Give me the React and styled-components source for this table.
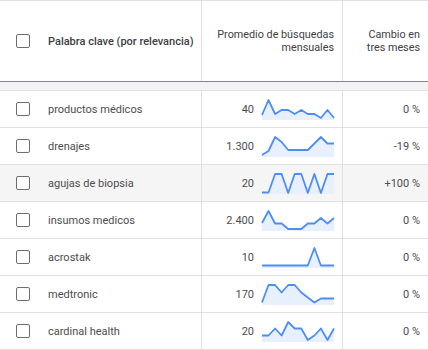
import React from "react";
import styled, { createGlobalStyle } from "styled-components";

const GlobalStyle = createGlobalStyle`
  body {
    margin: 0;
    background: #ffffff;
    font-family: Roboto, "Liberation Sans", Arial, sans-serif;
  }
`;

const Table = styled.div`
  width: 428px;
  overflow: hidden;
  border-top: 1px solid #e0e0e0;
`;

const Row = styled.div`
  display: grid;
  grid-template-columns: 202px 141px 1fr;
  height: ${(p) => (p.$header ? "80px" : "36px")};
  background: ${(p) => (p.$active ? "#f5f5f5" : "#ffffff")};
  border-bottom: 1px solid ${(p) => (p.$header ? "#80868b" : "#e0e0e0")};
  color: ${(p) => (p.$header ? "#3c4043" : "#4d4d4d")};
  font-size: 11px;
`;

const Band = styled.div`
  height: 8px;
  background: #f1f3f4;
  border-bottom: 1px solid #e0e0e0;
`;

const KeywordCell = styled.div`
  display: flex;
  align-items: center;
  gap: 18px;
  padding-left: 16px;
  border-right: 1px solid #e0e0e0;
  font-weight: ${(p) => (p.$header ? 500 : 400)};
`;

const NumberCell = styled.div`
  display: flex;
  align-items: center;
  justify-content: flex-end;
  gap: 8px;
  padding-right: 8px;
  border-right: 1px solid #e0e0e0;
  text-align: right;
  line-height: 13px;
  font-size: ${(p) => (p.$header ? "10.8px" : "11px")};
`;

const ChangeCell = styled.div`
  display: flex;
  align-items: center;
  justify-content: flex-end;
  padding-right: 8px;
  text-align: right;
  line-height: 13px;
  font-size: ${(p) => (p.$header ? "10.8px" : "11px")};
`;

const Checkbox = styled.span`
  box-sizing: border-box;
  width: 14px;
  height: 14px;
  flex: none;
  border: 1.5px solid #6e6e6e;
  border-radius: 2px;
  background: #ffffff;
`;

const Spark = styled.svg`
  width: 72px;
  height: 21px;
  flex: none;
  overflow: visible;
`;

const Sparkline = ({ data }) => {
  const step = 72 / (data.length - 1);
  const pts = data.map((y, i) => `${(i * step).toFixed(1)},${Math.min(Math.max(y, 1), 20)}`);
  const line = pts.join(" ");
  return (
    <Spark viewBox="0 0 72 21">
      <polygon points={`0,21 ${line} 72,21`} fill="#e8f0fe" />
      <polyline points={line} fill="none" stroke="#4d8ef5" strokeWidth="1.8" strokeLinejoin="round" />
    </Spark>
  );
};

const rows = [
  {
    keyword: "productos médicos",
    avg: "40",
    change: "0 %",
    data: [16, 0.5, 15, 11, 11, 15, 11, 15, 15, 19, 11, 19],
  },
  {
    keyword: "drenajes",
    avg: "1.300",
    change: "-19 %",
    data: [19, 15, 1, 6, 14, 14, 14, 14, 7.5, 1, 7.5, 7.5],
  },
  {
    keyword: "agujas de biopsia",
    avg: "20",
    change: "+100 %",
    data: [19.5, 19.5, 1, 1, 20, 1, 1, 20, 0.5, 20, 1, 1],
    active: true,
  },
  {
    keyword: "insumos medicos",
    avg: "2.400",
    change: "0 %",
    data: [13, 0.5, 13.5, 13.5, 19, 19, 19, 13.5, 13.5, 8, 13.5, 8],
  },
  {
    keyword: "acrostak",
    avg: "10",
    change: "0 %",
    data: [18.5, 18.5, 18.5, 18.5, 18.5, 18.5, 18.5, 18.5, 0.5, 18.5, 18.5, 18.5],
  },
  {
    keyword: "medtronic",
    avg: "170",
    change: "0 %",
    data: [18.5, 1, 1, 8.5, 1, 1, 8.5, 13.5, 18.5, 14.5, 14.5, 14.5],
  },
  {
    keyword: "cardinal health",
    avg: "20",
    change: "0 %",
    data: [14.5, 14.5, 7.5, 14.5, 0.5, 7.5, 7.5, 19, 14.5, 7.5, 19, 7.5],
  },
];

export default function App() {
  return (
    <>
      <GlobalStyle />
      <Table>
        <Row $header>
          <KeywordCell $header>
            <Checkbox />
            Palabra clave (por relevancia)
          </KeywordCell>
          <NumberCell $header>
            Promedio de búsquedas
            <br />
            mensuales
          </NumberCell>
          <ChangeCell $header>
            Cambio en
            <br />
            tres meses
          </ChangeCell>
        </Row>
        <Band />
        {rows.map((r) => (
          <Row key={r.keyword} $active={r.active}>
            <KeywordCell>
              <Checkbox />
              {r.keyword}
            </KeywordCell>
            <NumberCell>
              {r.avg}
              <Sparkline data={r.data} />
            </NumberCell>
            <ChangeCell>{r.change}</ChangeCell>
          </Row>
        ))}
      </Table>
    </>
  );
}
